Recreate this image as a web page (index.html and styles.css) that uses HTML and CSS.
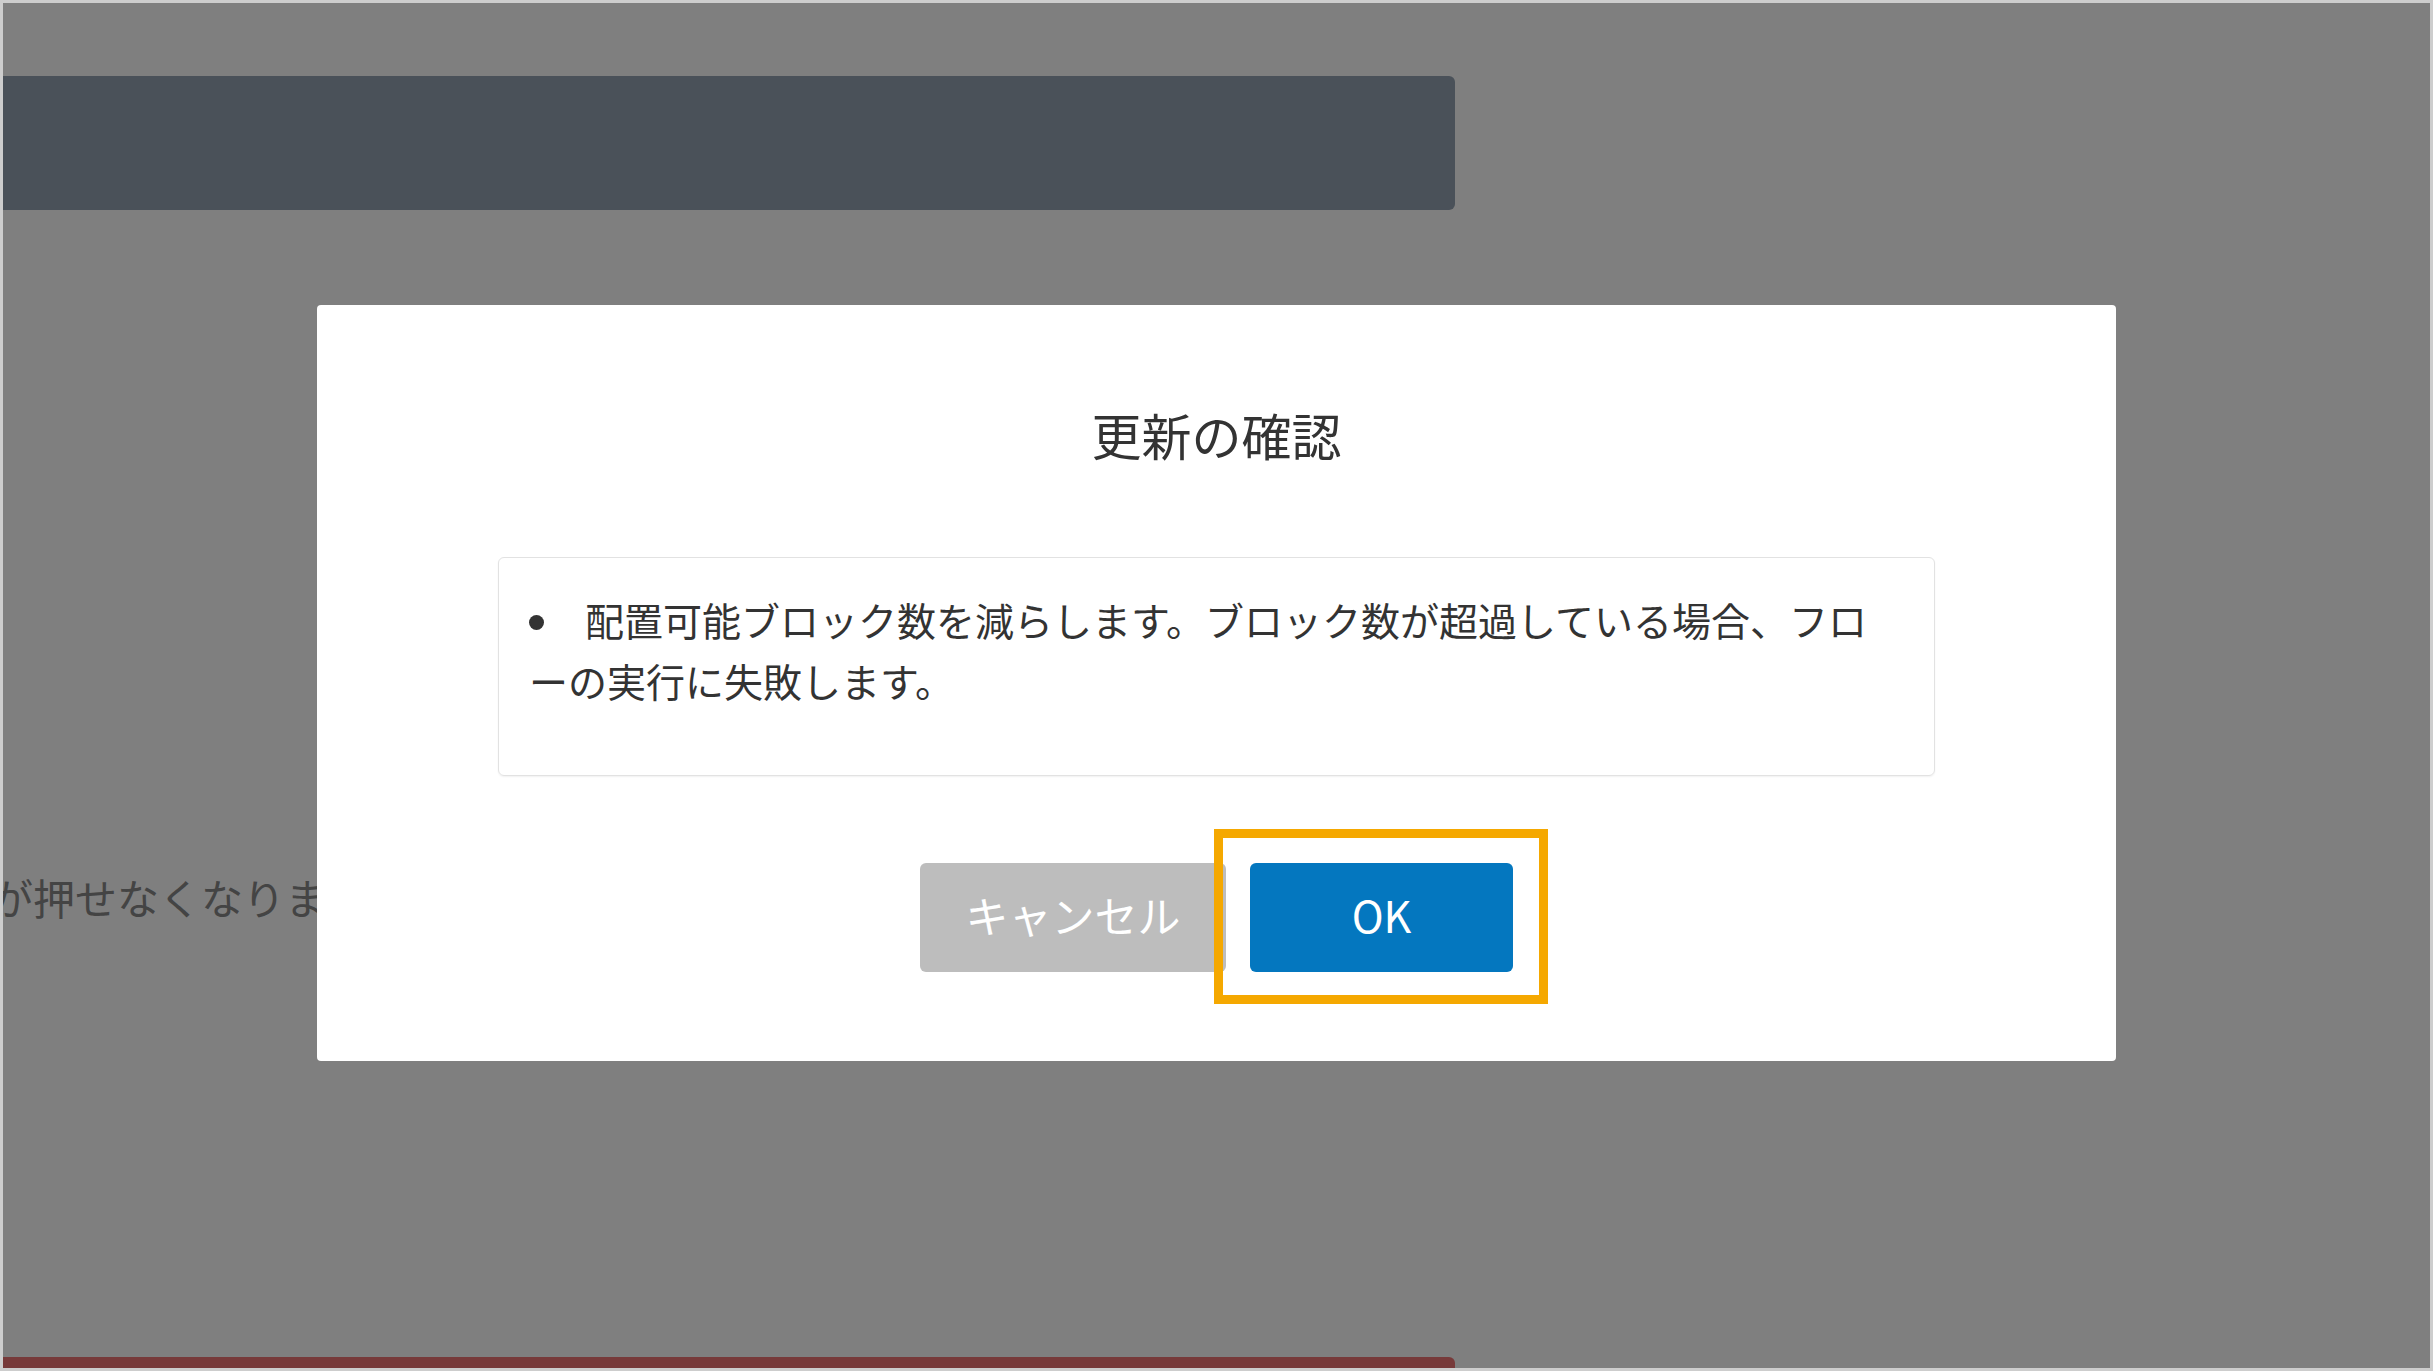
FILE: index.html
```html
<html lang="ja">
  <head>
    <meta charset="UTF-8" />
    <meta name="viewport" content="width=device-width, initial-scale=1.0" />
    <title>更新の確認</title>

    <link rel="stylesheet" href="styles.css">
  </head>

  <body>
    <div class="frame">
      <div class="page">
        <div class="topBar"></div>
        <div class="notice">が押せなくなります。</div>
        <div class="bottomBar"></div>
      </div>

      <div class="overlay">
        <div class="modal">
          <div class="modalTitle">更新の確認</div>

          <div class="messageBox">
            <ul class="messageList">
              <li>配置可能ブロック数を減らします。ブロック数が超過している場合、フローの実行に失敗します。</li>
            </ul>
          </div>

          <div class="buttons">
            <button class="btn btnCancel">キャンセル</button>
            <div class="okWrap">
              <button class="btn btnOk">OK</button>
              <div class="highlight"></div>
            </div>
          </div>
        </div>
      </div>
    </div>
  </body>
</html>
```

FILE: styles.css
```css
* {
  box-sizing: border-box;
}

body {
  margin: 0;
  font-family: "Noto Sans CJK JP", "Noto Sans", sans-serif;
  color: #333;
}

.frame {
  position: relative;
  width: 2433px;
  height: 1371px;
  border: 3px solid #cdcdcd;
  background-color: white;
  overflow: hidden;
}

.page {
  padding-top: 73px;
}

.topBar {
  margin-left: -20px;
  width: 1472px;
  height: 134px;
  background-color: #94a2b2;
  border-radius: 6px;
}

.notice {
  margin-top: 657px;
  margin-left: -12px;
  font-size: 42px;
  line-height: 60px;
  color: #888;
  white-space: nowrap;
}

.bottomBar {
  margin-top: 430px;
  margin-left: -20px;
  width: 1472px;
  height: 40px;
  background-color: #ee7474;
  border-radius: 6px;
}

.overlay {
  position: absolute;
  top: 0;
  left: 0;
  right: 0;
  bottom: 0;
  display: flex;
  justify-content: center;
  align-items: flex-start;
  padding-top: 302px;
  background-color: rgba(0, 0, 0, 0.5);
}

.modal {
  width: 1799px;
  padding: 94px 181px 89px;
  background-color: white;
  border-radius: 4px;
}

.modalTitle {
  text-align: center;
  font-size: 50px;
  line-height: 70px;
  color: #333;
  margin-bottom: 88px;
}

.messageBox {
  height: 219px;
  padding: 31px 30px 0;
  border: 1px solid #e2e2e2;
  border-radius: 6px;
  box-shadow: 0 1px 2px rgba(0, 0, 0, 0.06);
}

.messageList {
  margin: 0;
  padding: 0;
  list-style: none;
  font-size: 39px;
  line-height: 61px;
  color: #333;
}

.messageList li::before {
  content: '';
  display: inline-block;
  width: 15px;
  height: 15px;
  margin-right: 41px;
  border-radius: 50%;
  background-color: #333;
  vertical-align: 6px;
}

.buttons {
  display: flex;
  justify-content: center;
  gap: 24px;
  margin-top: 87px;
}

.btn {
  height: 109px;
  padding: 0 0 8px;
  border: none;
  border-radius: 6px;
  font-family: "Noto Sans CJK JP", "Noto Sans", sans-serif;
  font-size: 43px;
  color: white;
  cursor: pointer;
}

.btnCancel {
  width: 306px;
  background-color: #bdbdbd;
}

.okWrap {
  position: relative;
}

.btnOk {
  display: block;
  width: 263px;
  background-color: #0477bf;
}

.highlight {
  position: absolute;
  top: -34px;
  left: -36px;
  right: -35px;
  bottom: -32px;
  border: 9px solid #f5a800;
}
```
